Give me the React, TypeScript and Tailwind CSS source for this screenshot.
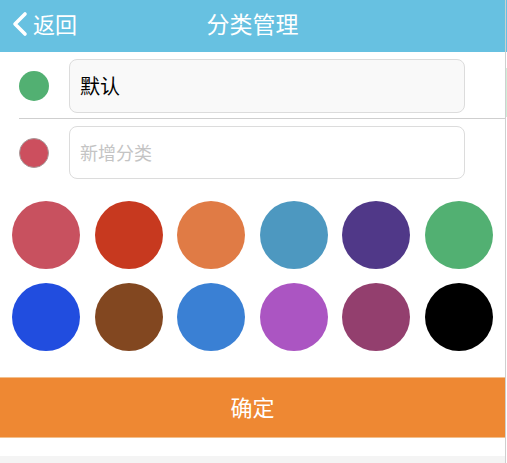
import React from "react";

const palette = [
  "#c8515f",
  "#c7391f",
  "#e07b45",
  "#4d98c0",
  "#503888",
  "#52b072",
  "#214ddf",
  "#824720",
  "#3a80d4",
  "#ab55c2",
  "#933f6e",
  "#000000",
];

export default function App() {
  return (
    <div
      className="flex w-[507px] h-[463px] bg-white overflow-hidden"
      style={{ fontFamily: '"Noto Sans CJK SC", "Noto Sans", sans-serif' }}
    >
      <div className="flex flex-col w-[505px] shrink-0">
        <header className="relative flex items-center h-[52px] pb-[6px] bg-[#67c1e1] text-white">
          <div className="flex items-center pl-[10px]">
            <svg width="19" height="26" viewBox="0 0 19 26" fill="none" className="mt-[2px]">
              <path d="M15 3 L5 13 L15 23" stroke="white" strokeWidth="3.6" strokeLinecap="round" strokeLinejoin="round" />
            </svg>
            <span className="ml-[4px] text-[22px] leading-none">返回</span>
          </div>
          <div className="absolute left-0 right-0 text-center text-[23px] leading-none pointer-events-none">分类管理</div>
        </header>

        <div className="flex items-center h-[66px] pt-[2px]">
          <div className="w-[30px] h-[30px] rounded-full bg-[#52b072] ml-[19px]" />
          <div className="ml-[20px] w-[396px] h-[54px] rounded-[8px] border border-[#dcdcdc] bg-[#f9f9f9] flex items-center pl-[10px] text-[20px] text-black">
            默认
          </div>
        </div>
        <div className="ml-[19px] h-px bg-[#cfcfcf]" />

        <div className="flex items-center h-[66px] pt-[1px]">
          <div className="w-[30px] h-[30px] rounded-full bg-[#cc4f5e] border border-[#a89a9a] ml-[19px]" />
          <div className="ml-[20px] w-[396px] h-[53px] rounded-[8px] border border-[#dcdcdc] bg-white flex items-center pl-[10px] text-[18px] text-[#c4c4c4]">
            新增分类
          </div>
        </div>

        <div className="grid grid-cols-6 gap-x-[14.4px] gap-y-[14px] px-[12px] pt-[16px]">
          {palette.map((c) => (
            <div key={c} className="w-[68px] h-[68px] rounded-full" style={{ backgroundColor: c }} />
          ))}
        </div>

        <button className="mt-[26px] h-[61px] w-full bg-[#ee8833] border-y border-[#f2c08e] text-white text-[22px] flex items-center justify-center pb-[2px]">
          确定
        </button>
        <div className="h-[18px]" />
        <div className="flex-1 bg-[#f4f4f4]" />
      </div>
      <div className="w-px bg-[#cfcfcf]" />
      <div className="flex-1 flex flex-col">
        <div className="h-[52px] bg-[#67c1e1]" />
        <div className="h-[16px]" />
        <div className="h-[49px] bg-[#cfeed9]" />
      </div>
    </div>
  );
}
